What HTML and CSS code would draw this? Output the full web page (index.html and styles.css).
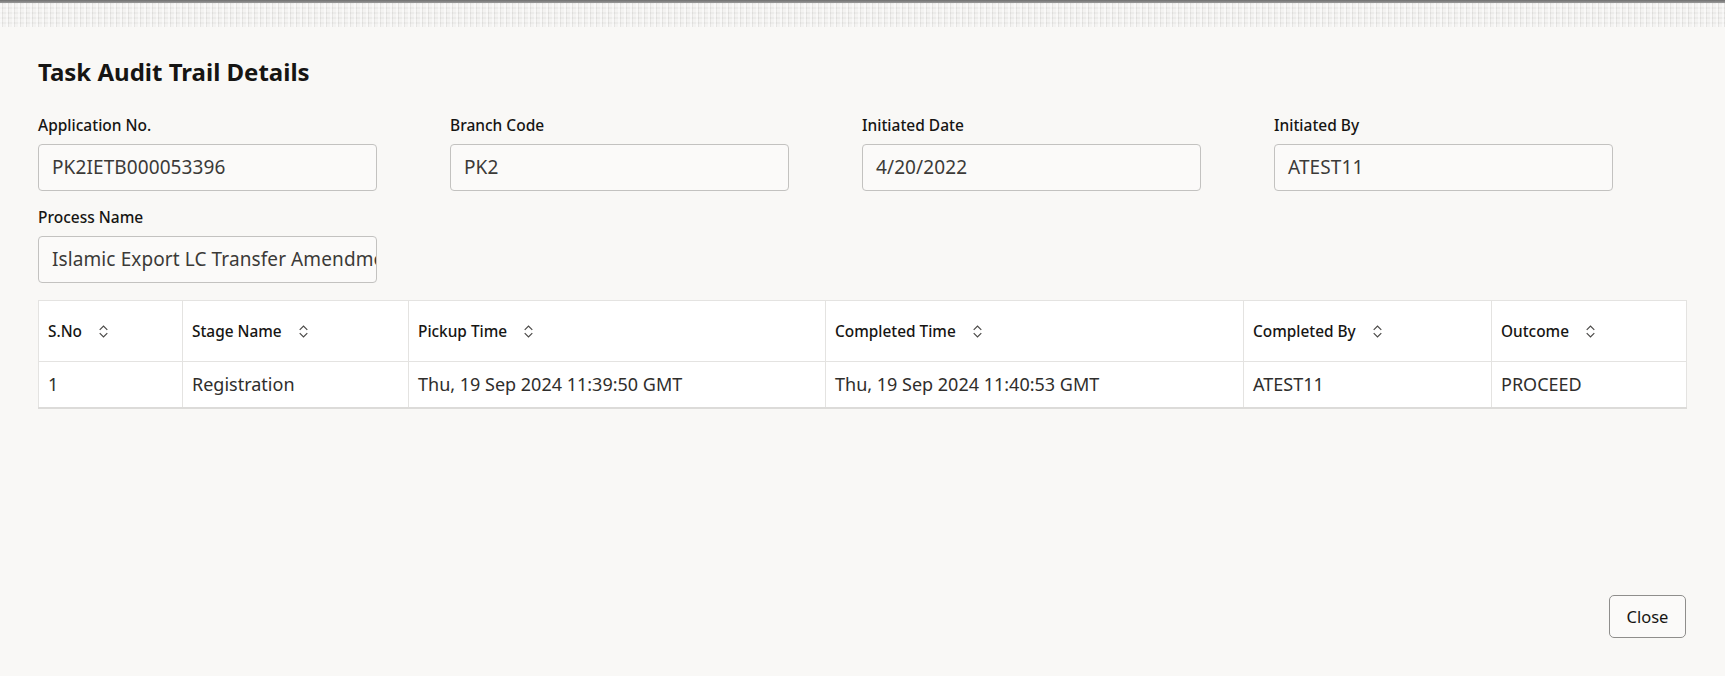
FILE: index.html
```html
<!DOCTYPE html>
<html lang="en">
<head>
<meta charset="utf-8">
<title>Task Audit Trail Details</title>
<link rel="stylesheet" href="styles.css">
</head>
<body>
<div class="backdrop-strip"></div>
<div class="dialog">
  <h1 class="dialog-title">Task Audit Trail Details</h1>
  <div class="fields">
    <div class="field">
      <label class="field-label">Application No.</label>
      <div class="field-input">PK2IETB000053396</div>
    </div>
    <div class="field">
      <label class="field-label">Branch Code</label>
      <div class="field-input">PK2</div>
    </div>
    <div class="field">
      <label class="field-label">Initiated Date</label>
      <div class="field-input">4/20/2022</div>
    </div>
    <div class="field">
      <label class="field-label">Initiated By</label>
      <div class="field-input">ATEST11</div>
    </div>
    <div class="field">
      <label class="field-label">Process Name</label>
      <div class="field-input">Islamic Export LC Transfer Amendment</div>
    </div>
  </div>

  <table class="audit-table">
    <colgroup>
      <col class="c1"><col class="c2"><col class="c3"><col class="c4"><col class="c5"><col class="c6">
    </colgroup>
    <thead>
      <tr>
        <th><span class="th-inner">S.No<svg class="sort" viewBox="0 0 10 12"><path d="M1.5 4.5 L5 1 L8.5 4.5 M1.5 7.5 L5 11 L8.5 7.5"/></svg></span></th>
        <th><span class="th-inner">Stage Name<svg class="sort" viewBox="0 0 10 12"><path d="M1.5 4.5 L5 1 L8.5 4.5 M1.5 7.5 L5 11 L8.5 7.5"/></svg></span></th>
        <th><span class="th-inner">Pickup Time<svg class="sort" viewBox="0 0 10 12"><path d="M1.5 4.5 L5 1 L8.5 4.5 M1.5 7.5 L5 11 L8.5 7.5"/></svg></span></th>
        <th><span class="th-inner">Completed Time<svg class="sort" viewBox="0 0 10 12"><path d="M1.5 4.5 L5 1 L8.5 4.5 M1.5 7.5 L5 11 L8.5 7.5"/></svg></span></th>
        <th><span class="th-inner">Completed By<svg class="sort" viewBox="0 0 10 12"><path d="M1.5 4.5 L5 1 L8.5 4.5 M1.5 7.5 L5 11 L8.5 7.5"/></svg></span></th>
        <th><span class="th-inner">Outcome<svg class="sort" viewBox="0 0 10 12"><path d="M1.5 4.5 L5 1 L8.5 4.5 M1.5 7.5 L5 11 L8.5 7.5"/></svg></span></th>
      </tr>
    </thead>
    <tbody>
      <tr>
        <td>1</td>
        <td>Registration</td>
        <td>Thu, 19 Sep 2024 11:39:50 GMT</td>
        <td>Thu, 19 Sep 2024 11:40:53 GMT</td>
        <td>ATEST11</td>
        <td>PROCEED</td>
      </tr>
    </tbody>
  </table>

  <div class="dialog-footer">
    <button class="btn-close" type="button">Close</button>
  </div>
</div>
</body>
</html>
```

FILE: styles.css
```css
* { box-sizing: border-box; }

html, body {
  margin: 0;
  padding: 0;
  height: 100%;
}

body {
  font-family: "Noto Sans", "Open Sans", sans-serif;
  color: #161513;
  background: #efeeec;
  overflow: hidden;
}

.backdrop-strip {
  height: 27px;
  background:
    linear-gradient(to bottom, #6f6f6f 0, #9a9a9a 3px, transparent 3px),
    repeating-linear-gradient(90deg, rgba(255,255,255,0.6) 0 2px, rgba(205,204,202,0.3) 2px 3px, rgba(255,255,255,0.25) 3px 6px),
    repeating-linear-gradient(0deg, #f0efed 0 3px, #e6e5e3 3px 5px);
}

.dialog {
  height: calc(100% - 27px);
  background: #f9f8f6;
  padding: 0 39px 38px 38px;
  display: flex;
  flex-direction: column;
}

.dialog-title {
  margin: 31px 0 0 0;
  font-size: 24px;
  line-height: 28px;
  font-weight: 700;
  color: #161513;
}

.fields {
  display: grid;
  grid-template-columns: repeat(4, 1fr);
  row-gap: 16px;
  margin-top: 29px;
}

.field {
  display: flex;
  flex-direction: column;
}

.field-label {
  font-size: 15.5px;
  line-height: 20px;
  font-weight: 500;
  color: #161513;
  margin-bottom: 9px;
}

.field-input {
  width: 339px;
  height: 47px;
  border: 1px solid #c3c2c0;
  border-radius: 4px;
  background: #fbfaf9;
  padding: 0 13px;
  font-size: 19px;
  letter-spacing: 0.1px;
  line-height: 45px;
  color: #3b3a38;
  white-space: nowrap;
  overflow: hidden;
}

.audit-table {
  margin-top: 17px;
  width: 1648px;
  border-collapse: collapse;
  table-layout: fixed;
  background: #ffffff;
  border: 1px solid #e2e1df;
  border-bottom: 2px solid #dcdbd9;
}

.c1 { width: 144px; }
.c2 { width: 226px; }
.c3 { width: 417px; }
.c4 { width: 418px; }
.c5 { width: 248px; }
.c6 { width: 195px; }

.audit-table th,
.audit-table td {
  border: 1px solid #e4e3e1;
  text-align: left;
  padding: 0 9px;
  white-space: nowrap;
  overflow: hidden;
}

.audit-table th {
  height: 61px;
  font-size: 15.4px;
  font-weight: 500;
  color: #161513;
}

.th-inner {
  display: inline-flex;
  align-items: center;
  gap: 16px;
}

.sort {
  width: 11px;
  height: 13px;
  fill: none;
  stroke: #4a4947;
  stroke-width: 1.1;
}

.audit-table td {
  height: 46px;
  font-size: 18px;
  color: #2f2e2c;
}

.dialog-footer {
  margin-top: auto;
  display: flex;
  justify-content: flex-end;
}

.btn-close {
  width: 77px;
  height: 43px;
  border: 1px solid #8f8e8c;
  border-radius: 5px;
  background: #fbfaf9;
  font-family: "Noto Sans", "Open Sans", sans-serif;
  font-size: 16.5px;
  color: #161513;
  padding: 0;
}
```
